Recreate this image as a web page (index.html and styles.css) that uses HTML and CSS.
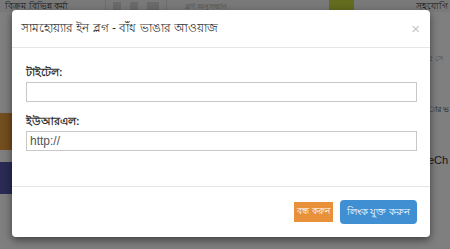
FILE: index.html
```html
<!DOCTYPE html>
<html lang="bn">

<head>
    <meta charset="UTF-8">
    <meta name="viewport" content="width=device-width, initial-scale=1.0">
    <title>লিংক যুক্ত করুন</title>
    <link rel="stylesheet" href="styles.css">
</head>

<body>
    <div class="page">
        <div class="topbar">
            <span class="brand">বিক্রম বিভিন্ন কর্মা</span>
            <span class="tool-icons">
                <span class="tool"></span>
                <span class="tool"></span>
                <span class="tool wide"></span>
            </span>
            <span class="search">ব্লগ অনুসন্ধান</span>
            <span class="search-btn"></span>
            <span class="help">সহযোগি</span>
        </div>
        <div class="content">
            <div class="side">
                <div class="band brown"></div>
                <div class="band navy"></div>
            </div>
            <div class="main"></div>
            <div class="aside">
                <p class="aside-line small">৫ সে</p>
                <p class="aside-line">ার ভ</p>
                <p class="aside-line latin">eCh</p>
            </div>
        </div>
    </div>

    <div class="backdrop"></div>

    <div class="modal">
        <div class="modal-header">
            <h4 class="modal-title">সামহোয়্যার ইন ব্লগ - বাঁধ ভাঙার আওয়াজ</h4>
            <span class="close">×</span>
        </div>
        <div class="modal-body">
            <div class="form-group">
                <label for="linkTitle">টাইটেল:</label>
                <input type="text" id="linkTitle">
            </div>
            <div class="form-group">
                <label for="linkUrl">ইউআরএল:</label>
                <input type="text" id="linkUrl" value="http://">
            </div>
        </div>
        <div class="modal-footer">
            <button type="button" class="btn btn-close">বন্ধ করুন</button>
            <button type="button" class="btn btn-add">লিংক যুক্ত করুন</button>
        </div>
    </div>
</body>

</html>
```

FILE: styles.css
```css
body {
    font-family: "Liberation Sans", Arial, sans-serif;
    margin: 0;
    width: 450px;
    height: 249px;
    overflow: hidden;
    background-color: #fff;
}

.page {
    height: 249px;
}

.topbar {
    display: flex;
    align-items: center;
    height: 12px;
    padding: 0 0 0 5px;
    background-color: #f2f2f2;
    font-size: 9px;
    color: #333;
}

.brand {
    width: 100px;
    white-space: nowrap;
}

.tool-icons {
    display: flex;
    justify-content: center;
    gap: 9px;
    width: 60px;
    height: 12px;
    align-items: center;
    border-left: 1px solid #ddd;
    border-right: 1px solid #ddd;
}

.tool {
    width: 8px;
    height: 8px;
    background-color: #d4d4d4;
}

.tool.wide {
    width: 12px;
}

.search {
    width: 144px;
    padding-left: 18px;
    color: #aaa;
    font-size: 8px;
    white-space: nowrap;
}

.search-btn {
    width: 25px;
    height: 12px;
    background-color: #c9d940;
}

.help {
    margin-left: auto;
    padding-right: 2px;
    white-space: nowrap;
}

.content {
    display: flex;
    height: 237px;
}

.side {
    width: 14px;
    padding-top: 101px;
}

.band {
    height: 37px;
}

.brown {
    background-color: #e59b3b;
}

.navy {
    height: 32px;
    margin-top: 12px;
    background-color: #5557a8;
}

.main {
    flex: 1;
}

.aside {
    width: 22px;
    padding-top: 40px;
    font-size: 8px;
    color: #333;
    white-space: nowrap;
}

.aside-line {
    margin: 0 0 38px 0;
}

.aside-line.small {
    color: #aaa;
    font-size: 8px;
}

.aside-line.latin {
    font-size: 11px;
}

.backdrop {
    position: absolute;
    inset: 0;
    background-color: rgba(0, 0, 0, 0.5);
}

.modal {
    position: absolute;
    left: 12px;
    top: 10px;
    width: 418px;
    background-color: #fff;
    border-radius: 4px;
    box-shadow: 0 3px 9px rgba(0, 0, 0, 0.5);
    color: #333;
}

.modal-header {
    display: flex;
    justify-content: space-between;
    align-items: center;
    height: 37px;
    padding: 0 10px 0 9px;
    border-bottom: 1px solid #e5e5e5;
}

.modal-title {
    margin: 0;
    font-size: 12px;
    font-weight: normal;
}

.close {
    font-size: 15px;
    color: #c5c5c5;
}

.modal-body {
    padding: 17px 13px 35px 14px;
}

.form-group {
    margin-bottom: 12px;
}

.form-group:last-child {
    margin-bottom: 0;
}

.form-group label {
    display: block;
    height: 14px;
    line-height: 14px;
    font-size: 10.5px;
    font-weight: bold;
    margin-bottom: 3px;
}

.form-group input[type="text"] {
    display: block;
    box-sizing: border-box;
    width: 391px;
    height: 20px;
    padding: 0 3px;
    font-family: "Liberation Sans", Arial, sans-serif;
    font-size: 12px;
    color: #555;
    border: 1px solid #c8c8c8;
    border-radius: 0;
    outline: none;
}

.modal-footer {
    display: flex;
    justify-content: flex-end;
    align-items: center;
    gap: 7px;
    height: 50px;
    padding: 0 13px 0 0;
    border-top: 1px solid #e5e5e5;
}

.btn {
    border: none;
    color: #fff;
    cursor: pointer;
    font-family: "Liberation Sans", Arial, sans-serif;
}

.btn-close {
    height: 20px;
    padding: 0 3px;
    font-size: 8.5px;
    background-color: #e8913a;
    border-radius: 0;
}

.btn-add {
    height: 24px;
    padding: 0 7px;
    font-size: 9.5px;
    background-color: #3f8fd2;
    border-radius: 4px;
}
```
